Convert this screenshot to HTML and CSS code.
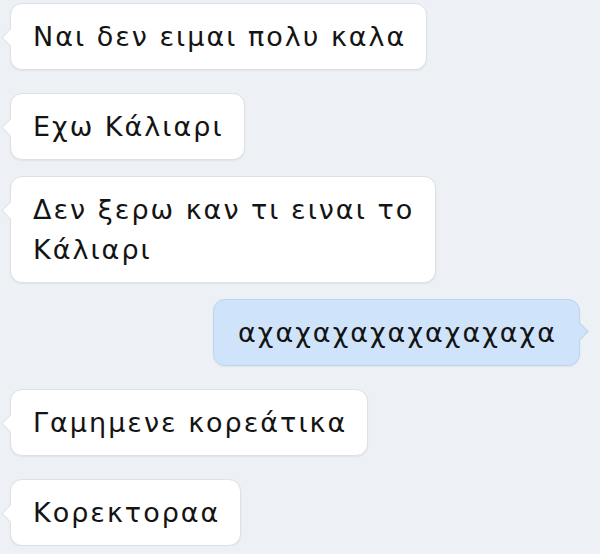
FILE: index.html
```html
<!DOCTYPE html>
<html lang="el">
<head>
    <meta charset="UTF-8">
    <meta name="viewport" content="width=device-width, initial-scale=1.0">
    <title>Συνομιλία</title>
    <link rel="stylesheet" href="styles.css">
</head>
<body>
<main class="chat">
    <p class="msg msg-in">Ναι δεν ειμαι πολυ καλα</p>
    <p class="msg msg-in">Εχω Κάλιαρι</p>
    <p class="msg msg-in msg-tight">Δεν ξερω καν τι ειναι το Κάλιαρι</p>
    <p class="msg msg-out msg-tight">αχαχαχαχαχαχαχαχα</p>
    <p class="msg msg-in">Γαμημενε κορεάτικα</p>
    <p class="msg msg-in">Κορεκτοραα</p>
</main>
</body>
</html>
```

FILE: styles.css
```css
body {
    margin: 0;
    padding: 0;
    background-color: #edf0f4;
    font-family: "DejaVu Sans", "Liberation Sans", sans-serif;
    color: #141414;
}

.chat {
    display: flex;
    flex-direction: column;
    gap: 23px;
    padding: 3px 20px 0 10px;
}

.msg {
    position: relative;
    margin: 0;
    width: fit-content;
    max-width: 382px;
    padding: 13px 20px 12px 22px;
    font-size: 27px;
    line-height: 40px;
    letter-spacing: 2px;
    border: 1px solid #dde0e4;
    border-radius: 12px;
    box-shadow: 0 1px 2px rgba(0, 0, 0, 0.06);
}

.msg-tight {
    margin-top: -7px;
}

/* speech tail */
.msg::before {
    content: "";
    position: absolute;
    top: 27px;
    width: 12px;
    height: 12px;
    transform: rotate(45deg);
}

.msg-in {
    align-self: flex-start;
    background-color: #fff;
}

.msg-in::before {
    left: -7px;
    background-color: #fff;
    border-left: 1px solid #dde0e4;
    border-bottom: 1px solid #dde0e4;
}

.msg-out {
    align-self: flex-end;
    background-color: #cfe4fa;
    border-color: #bcd5ee;
    padding-left: 24px;
    padding-right: 22px;
}

.msg-out::before {
    right: -7px;
    top: 25px;
    background-color: #cfe4fa;
    border-right: 1px solid #bcd5ee;
    border-top: 1px solid #bcd5ee;
}
```
